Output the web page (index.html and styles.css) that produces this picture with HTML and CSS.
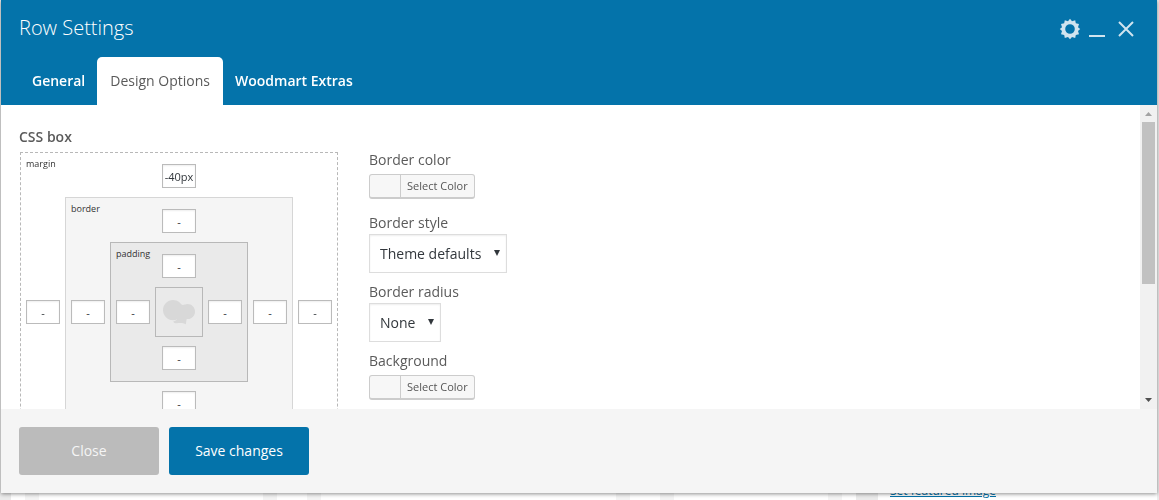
FILE: index.html
```html
<!DOCTYPE html>
<html lang="en">
<head>
    <meta charset="UTF-8">
    <meta name="viewport" content="width=device-width, initial-scale=1.0">
    <title>Row Settings</title>
    <link rel="stylesheet" href="styles.css">
</head>
<body>

<!-- Page editor behind the panel -->
<div class="editor">
    <div class="editor-main">
        <div class="column"></div>
        <div class="column"></div>
        <div class="column"></div>
    </div>
    <div class="editor-side">
        <a href="#">Set featured image</a>
    </div>
</div>

<div class="panel">
    <div class="panel-header">
        <div class="title-bar">
            <h3>Row Settings</h3>
            <div class="controls">
                <button type="button" aria-label="Settings">
                    <svg width="22" height="22" viewBox="0 0 22 22">
                        <path fill-rule="evenodd" d="M11 .800l2 2.400 3.200-1 .600 3 3.200.800-1 3.200 2.200 1.800-2.200 2 1 3.200-3.200.700-.600 3.100-3.200-1-2 2.200-2-2.200-3.200 1-.600-3.100L2 16.200 3 13 .800 11 3 9.200 2 6l3.200-.800.600-3 3.200 1zM11 6.200a4.800 4.800 0 1 0 0 9.600 4.800 4.800 0 0 0 0-9.600z"/>
                    </svg>
                </button>
                <button type="button" aria-label="Minimize">
                    <svg width="16" height="22" viewBox="0 0 16 22">
                        <path d="M0 17h16v2H0z"/>
                    </svg>
                </button>
                <button type="button" class="close" aria-label="Close panel">
                    <svg width="16" height="22" viewBox="0 0 16 22">
                        <path class="stroke" d="M1 4l14 14M15 4L1 18"/>
                    </svg>
                </button>
            </div>
        </div>
        <div class="tabs">
            <button type="button">General</button>
            <button type="button" class="active">Design Options</button>
            <button type="button">Woodmart Extras</button>
        </div>
    </div>

    <div class="panel-body">
        <div class="content">
            <h4>CSS box</h4>
            <div class="options">
                <div class="box margin-box">
                    <span class="box-label">margin</span>
                    <input type="text" class="top" aria-label="Margin top" value="-40px">
                    <input type="text" class="left" aria-label="Margin left" value="-">
                    <div class="box border-box">
                        <span class="box-label">border</span>
                        <input type="text" class="top" aria-label="Border top" value="-">
                        <input type="text" class="left" aria-label="Border left" value="-">
                        <div class="box padding-box">
                            <span class="box-label">padding</span>
                            <input type="text" class="top" aria-label="Padding top" value="-">
                            <input type="text" class="left" aria-label="Padding left" value="-">
                            <div class="box-center">
                                <svg width="32" height="25" viewBox="0 0 32 25">
                                    <path d="M10 0C4.500 0 0 4.500 0 10s4.500 10.200 10 10.200c1.500 0 3-.300 4.200-.900-.700 1-2.200 1.900-4 2.100.600 1.500 2 1.900 3.400 1.900 3.400-.500 6.600-.500 9.200 1 .300-1.400.400-3.200.900-5.300C28.500 19.600 32 16 32 11.500 32 7.500 28.800 4 24.500 4c-1.800 0-3.200.900-4.800 1-1.700-.300-2.200-1.700-3.500-3C14.600.700 12.500 0 10 0z"/>
                                </svg>
                            </div>
                            <input type="text" class="right" aria-label="Padding right" value="-">
                            <input type="text" class="bottom" aria-label="Padding bottom" value="-">
                        </div>
                        <input type="text" class="right" aria-label="Border right" value="-">
                        <input type="text" class="bottom" aria-label="Border bottom" value="-">
                    </div>
                    <input type="text" class="right" aria-label="Margin right" value="-">
                    <input type="text" class="bottom" aria-label="Margin bottom" value="-">
                </div>

                <div class="fields">
                    <div class="field">
                        <label for="border-color">Border color</label>
                        <button type="button" id="border-color" class="color-button"><span>Select Color</span></button>
                    </div>
                    <div class="field">
                        <label for="border-style">Border style</label>
                        <div class="select">
                            <select id="border-style">
                                <option>Theme defaults</option>
                            </select>
                        </div>
                    </div>
                    <div class="field">
                        <label for="border-radius">Border radius</label>
                        <div class="select">
                            <select id="border-radius">
                                <option>None</option>
                            </select>
                        </div>
                    </div>
                    <div class="field">
                        <label for="background">Background</label>
                        <button type="button" id="background" class="color-button"><span>Select Color</span></button>
                    </div>
                </div>
            </div>
        </div>
        <div class="scrollbar">
            <svg width="7" height="4" viewBox="0 0 7 4"><path fill="#a3a3a3" d="M0 4l3.500-4L7 4z"/></svg>
            <div class="thumb"></div>
            <svg width="7" height="4" viewBox="0 0 7 4"><path fill="#505050" d="M0 0h7L3.500 4z"/></svg>
        </div>
    </div>

    <div class="panel-footer">
        <button type="button" class="button-close">Close</button>
        <button type="button" class="button-save">Save changes</button>
    </div>
</div>

</body>
</html>
```
FILE: styles.css
```css
* {
    box-sizing: border-box;
}

body {
    margin: 0;
    height: 100vh;
    overflow: hidden;
    font-family: "Open Sans", sans-serif;
    font-size: 14px;
    line-height: 20px;
    color: #5a5a5a;
    background-color: #ebebeb;
}

button, input, select {
    font-family: inherit;
    margin: 0;
}

button {
    border: none;
    padding: 0;
    cursor: pointer;
}

h3, h4 {
    margin: 0;
}

/* Editor */
.editor {
    display: flex;
    gap: 22px;
    height: 100%;
    padding: 0 2px 0 11px;
}

.editor-main {
    flex: 1;
    display: grid;
    grid-template-columns: 252fr 323fr 182fr;
    gap: 30px;
    padding: 0 14px;
    background-color: #fff;
}

.column {
    border: solid #f4f4f4;
    border-width: 0 14px;
}

.editor-side {
    display: flex;
    align-items: flex-end;
    width: 279px;
    padding: 0 12px;
    background-color: #fff;
    font-size: 12px;
    line-height: 18px;
}

.editor-side a {
    color: #0473aa;
}

/* Panel */
.panel {
    position: fixed;
    top: 0;
    right: 2px;
    bottom: 7px;
    left: 1px;
    display: flex;
    flex-direction: column;
    background-color: #fff;
    box-shadow: 0 1px 4px rgba(0, 0, 0, 0.45);
}

.panel-header {
    background-color: #0473aa;
    color: #fff;
}

.title-bar {
    display: flex;
    justify-content: space-between;
    height: 57px;
    padding: 14px 23px 0 18px;
}

.title-bar h3 {
    font-size: 20px;
    font-weight: 300;
    line-height: 28px;
}

.controls {
    display: flex;
    align-items: center;
    gap: 8px;
    height: 30px;
}

.controls button {
    display: flex;
    background: none;
}

.controls .close {
    margin-left: 5px;
}

.controls svg {
    fill: #d0e4ef;
}

.controls .stroke {
    fill: none;
    stroke: #d0e4ef;
    stroke-width: 2;
}

.tabs {
    display: flex;
    padding-left: 19px;
}

.tabs button {
    height: 48px;
    padding: 0 12px 2px;
    border-radius: 5px 5px 0 0;
    background: none;
    color: #fff;
    font-size: 14px;
    font-weight: 600;
}

.tabs .active {
    padding: 0 13px 2px;
    background-color: #fff;
    color: #5a5a5a;
    font-weight: 400;
}

.panel-body {
    flex: 1;
    display: flex;
    min-height: 0;
    overflow: hidden;
}

.content {
    flex: 1;
    padding: 22px 18px;
}

.content h4 {
    font-size: 14px;
    font-weight: 600;
}

.options {
    display: flex;
    align-items: flex-start;
    gap: 31px;
    padding: 3px 0 0 1px;
}

/* Nested margin, border and padding boxes */
.box {
    display: grid;
    grid-template-columns: 44px auto 44px;
    grid-template-rows: 44px auto 44px;
    justify-items: center;
    align-items: center;
    border: 1px solid #b8b8b8;
}

.margin-box {
    margin-top: 2px;
    border-style: dashed;
}

.border-box {
    border-color: #d6d6d6;
    background-color: #f5f5f5;
}

.padding-box {
    background-color: #eaeaea;
}

.box > .box, .box-center {
    grid-area: 2 / 2;
}

.box-label {
    grid-area: 1 / 1 / 2 / 4;
    place-self: start;
    padding: 4px 5px;
    color: #333;
    font-size: 9px;
    line-height: 13px;
}

.box input {
    width: 34px;
    height: 24px;
    padding: 0;
    border: 1px solid #bbb;
    background-color: #fff;
    box-shadow: inset 0 1px 2px rgba(0, 0, 0, 0.07);
    color: #32373c;
    font-size: 11px;
    text-align: center;
}

.box .top {
    grid-area: 1 / 2;
    align-self: end;
    margin-bottom: 9px;
}

.box .left {
    grid-area: 2 / 1;
}

.box .right {
    grid-area: 2 / 3;
}

.box .bottom {
    grid-area: 3 / 2;
    align-self: start;
    margin-top: 9px;
}

.box-center {
    display: flex;
    align-items: center;
    justify-content: center;
    width: 48px;
    height: 50px;
    border: 1px solid #b8b8b8;
    fill: #d8d8d8;
}

/* Fields */
.field {
    margin-bottom: 9px;
}

.field label {
    display: block;
    margin-bottom: 1px;
}

.color-button {
    display: flex;
    height: 25px;
    margin: 4px 0 14px;
    padding-left: 30px;
    border: 1px solid #ccc;
    border-bottom-width: 2px;
    border-radius: 3px;
    background-color: #f7f7f7;
    color: #555;
    font-size: 11px;
}

.color-button span {
    padding: 0 6px;
    border-left: 1px solid #ccc;
    line-height: 22px;
}

.select {
    display: flex;
    position: relative;
    width: fit-content;
}

.select select {
    height: 39px;
    padding: 0 24px 0 10px;
    border: 1px solid #ddd;
    border-radius: 0;
    background-color: #fff;
    box-shadow: inset 0 1px 2px rgba(0, 0, 0, 0.07);
    color: #32373c;
    font-size: 14px;
    appearance: none;
}

.select::after {
    content: "";
    position: absolute;
    top: 16px;
    right: 7px;
    border: solid transparent;
    border-width: 6px 3px 0;
    border-top-color: #32373c;
    pointer-events: none;
}

/* Scrollbar */
.scrollbar {
    display: flex;
    flex-direction: column;
    align-items: center;
    width: 17px;
    padding: 7px 0;
    background-color: #f1f1f1;
}

.thumb {
    width: 13px;
    height: 56%;
    margin: 6px 0 auto;
    background-color: #c1c1c1;
}

/* Footer */
.panel-footer {
    display: flex;
    gap: 10px;
    padding: 18px;
    background-color: #f5f5f5;
}

.panel-footer button {
    width: 140px;
    height: 48px;
    padding-bottom: 2px;
    border-radius: 3px;
    color: #fff;
    font-size: 14px;
}

.panel-footer .button-close {
    background-color: #bbb;
    color: #f5f5f5;
}

.panel-footer .button-save {
    background-color: #0473aa;
}
```
